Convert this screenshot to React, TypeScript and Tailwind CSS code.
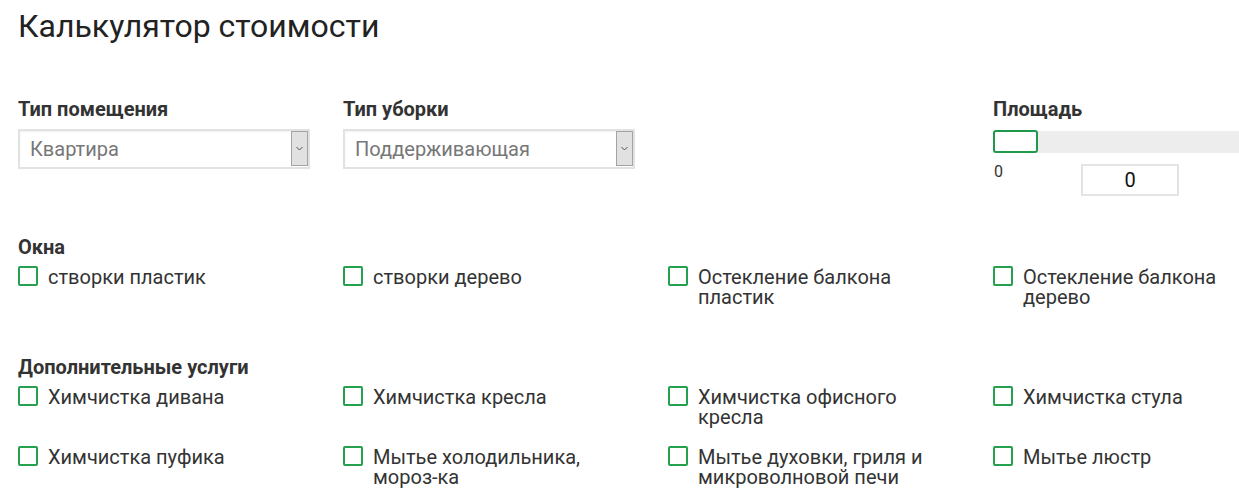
import React from "react";

const font = { fontFamily: "Roboto, 'Noto Sans', Arial, sans-serif" };

function Select({ value }: { value: string }) {
  return (
    <div className="relative mt-[8px] h-[40px] w-[292px] border-2 border-[#e2e2e2] bg-white shadow-[inset_0_1px_2px_rgba(0,0,0,0.06)]">
      <div className="flex h-full items-center pl-[10px] text-[20px] text-[#777777]">{value}</div>
      <div className="absolute right-0 top-0 bottom-[1px] flex w-[17px] items-center justify-center border border-[#a4a4a4] bg-[#e1e1e1]">
        <svg width="7" height="5" viewBox="0 0 7 5">
          <path d="M0.5 1 L3.5 4 L6.5 1" fill="none" stroke="#555" strokeWidth="1" />
        </svg>
      </div>
    </div>
  );
}

function Check({ label }: { label: string }) {
  return (
    <div className="flex items-start gap-[10px]">
      <div className="h-5 w-5 shrink-0 rounded-[2px] border-2 border-[#24a04e] bg-white" />
      <div className="mt-[1px] max-w-[245px] text-[20px] leading-[20px] text-[#333333]">{label}</div>
    </div>
  );
}

const okna = ["створки пластик", "створки дерево", "Остекление балкона пластик", "Остекление балкона дерево"];
const extra = [
  "Химчистка дивана",
  "Химчистка кресла",
  "Химчистка офисного кресла",
  "Химчистка стула",
  "Химчистка пуфика",
  "Мытье холодильника, мороз-ка",
  "Мытье духовки, гриля и микроволновой печи",
  "Мытье люстр",
];

export default function App() {
  return (
    <div className="h-[502px] w-[1239px] overflow-hidden bg-white" style={font}>
      <div className="w-[1318px] pl-[18px]">
        <h1 className="mt-[6px] text-[32px] leading-[40px] font-normal text-[#222222]">Калькулятор стоимости</h1>

        <div className="mt-[51px] grid grid-cols-[325px_325px_325px_325px]">
          <div>
            <div className="text-[20px] leading-[24px] font-bold text-[#333333]">Тип помещения</div>
            <Select value="Квартира" />
          </div>
          <div>
            <div className="text-[20px] leading-[24px] font-bold text-[#333333]">Тип уборки</div>
            <Select value="Поддерживающая" />
          </div>
          <div />
          <div>
            <div className="text-[20px] leading-[24px] font-bold text-[#333333]">Площадь</div>
            <div className="relative mt-[9px] h-[23px] w-[325px]">
              <div className="absolute left-0 right-0 top-[1px] bottom-0 bg-[#ededed]" />
              <div className="absolute left-0 top-0 h-[23px] w-[45px] rounded-[3px] border-2 border-[#1f9a4a] bg-white" />
            </div>
            <div className="mt-[11px] flex items-start">
              <div className="w-[88px] pl-[1px] text-[16px] leading-[16px] text-[#333333]">0</div>
              <div className="flex h-[32px] w-[98px] items-center justify-center border-2 border-[#e4e4e4] text-[20px] text-[#111111]">
                0
              </div>
            </div>
          </div>
        </div>

        <div className="mt-[39px] text-[20px] leading-[24px] font-bold text-[#333333]">Окна</div>
        <div className="mt-[7px] grid grid-cols-[325px_325px_325px_325px] gap-y-[19px]">
          {okna.map((l) => (
            <div key={l} className="min-h-[40px]">
              <Check label={l} />
            </div>
          ))}
        </div>

        <div className="mt-[48px] text-[20px] leading-[24px] font-bold text-[#333333]">Дополнительные услуги</div>
        <div className="mt-[7px] grid grid-cols-[325px_325px_325px_325px] gap-y-[19px]">
          {extra.map((l) => (
            <div key={l} className="min-h-[40px]">
              <Check label={l} />
            </div>
          ))}
        </div>
      </div>
    </div>
  );
}
